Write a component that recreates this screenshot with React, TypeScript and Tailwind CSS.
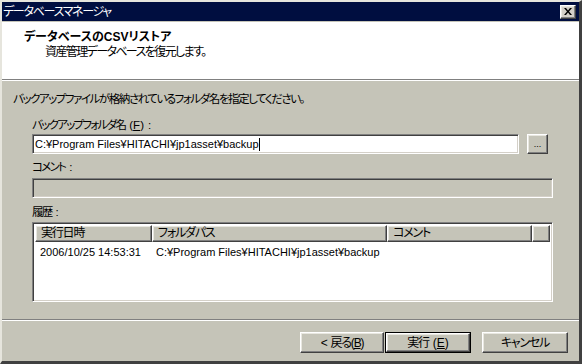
import React from "react";

const raised =
  "border border-t-white border-l-white border-r-[#404040] border-b-[#404040] shadow-[inset_-1px_-1px_0_#808080,inset_1px_1px_0_#e8e7e0]";
const sunken =
  "border border-t-[#808080] border-l-[#808080] border-r-white border-b-white shadow-[inset_1px_1px_0_#404040,inset_-1px_-1px_0_#d4d0c8]";

const jp = "text-[11.5px] tracking-[-1.7px]";
const path = "C:¥Program Files¥HITACHI¥jp1asset¥backup";

function HeaderCell({ w, children }: { w: string; children?: React.ReactNode }) {
  return (
    <div className={`${w} h-[17px] shrink-0 pl-[5px] leading-[15px] text-[12px] tracking-[-1.2px] ${raised}`}>
      {children}
    </div>
  );
}

function Key({ k }: { k: string }) {
  return (
    <span className="ml-[4px] tracking-normal">
      (<span className="underline">{k}</span>)
    </span>
  );
}

function Colon() {
  return <span className="ml-[4px] tracking-normal">:</span>;
}

export default function App() {
  return (
    <div className="w-[582px] h-[364px] overflow-hidden bg-[#c5c4b8] border-l-2 border-t-2 border-r-[3px] border-b-[3px] border-l-[#e6e5dd] border-t-[#e6e5dd] border-r-[#404040] border-b-[#404040] font-['Liberation_Sans','Noto_Sans_CJK_JP',sans-serif] text-[12px] text-black [font-feature-settings:'palt'] whitespace-nowrap flex flex-col">
      {/* title bar */}
      <div className="h-[19px] shrink-0 bg-[#000e40] flex items-center justify-between pl-[1px] pr-[3px]">
        <span className="text-white leading-[16px] text-[12px] tracking-[-1.3px]">データベースマネージャ</span>
        <div className={`w-[16px] h-[14px] bg-[#d4d0c8] flex items-center justify-center ${raised}`}>
          <svg width="8" height="7" viewBox="0 0 8 7">
            <path d="M0 0h2l2 2.5L6 0h2L5 3.5 8 7H6L4 4.5 2 7H0l3-3.5z" fill="#000" />
          </svg>
        </div>
      </div>
      <div className="h-[1px] shrink-0" />

      {/* header */}
      <div className="h-[57px] shrink-0 bg-white pl-[22px] pt-[7px]">
        <div className="font-bold leading-[16px]">データベースのCSVリストア</div>
        <div className="pl-[21px] leading-[16px] mt-[-1px] text-[12px] tracking-[-1.6px]">
          資産管理データベースを復元します。
        </div>
      </div>
      <div className="h-[1px] shrink-0 bg-[#808080]" />
      <div className="h-[1px] shrink-0 bg-white" />

      {/* body */}
      <div className="flex-1 pl-[11px] pt-[10px]">
        <div className="leading-[16px] text-[11.5px] tracking-[-1.45px]">
          バックアップファイルが格納されているフォルダ名を指定してください。
        </div>
        <div className="pl-[19px] mt-[10px] w-[540px]">
          <div className={`leading-[16px] ${jp}`}>
            バックアップフォルダ名<Key k="F" />
            <Colon />
          </div>
          <div className="flex items-center gap-[8px] mt-[1px]">
            <div className={`w-[487px] h-[20px] bg-white pl-[2px] flex items-center ${sunken}`}>
              <span className="leading-[16px] text-[11px]">{path}</span>
              <span className="w-[1px] h-[13px] bg-black" />
            </div>
            <div className={`w-[21px] h-[20px] flex items-center justify-center leading-none text-[9px] ${raised}`}>
              ...
            </div>
          </div>

          <div className={`leading-[16px] mt-[5px] ${jp}`}>
            コメント<Colon />
          </div>
          <div className={`w-[521px] h-[20px] mt-[3px] ${sunken}`} />

          <div className={`leading-[16px] mt-[6px] ${jp}`}>
            履歴<Colon />
          </div>
          <div className={`w-[521px] h-[80px] mt-[2px] bg-white p-[2px] ${sunken}`}>
            <div className="flex bg-[#c5c4b8]">
              <HeaderCell w="w-[117px]">実行日時</HeaderCell>
              <HeaderCell w="w-[235px]">フォルダパス</HeaderCell>
              <HeaderCell w="w-[145px]">コメント</HeaderCell>
              <HeaderCell w="flex-1" />
            </div>
            <div className="flex leading-[16px] mt-[2px] text-[11px]">
              <div className="w-[117px] shrink-0 pl-[5px]">2006/10/25 14:53:31</div>
              <div className="w-[235px] shrink-0 pl-[4px]">{path}</div>
            </div>
          </div>
        </div>
      </div>

      {/* footer */}
      <div className="h-[1px] shrink-0 bg-[#808080]" />
      <div className="h-[1px] shrink-0 bg-white" />
      <div className="h-[40px] shrink-0 flex items-start justify-end pt-[11px] pr-[11px] text-[12px] tracking-[-1.2px]">
        <div className={`w-[84px] h-[21px] flex items-center justify-center leading-[16px] ${raised}`}>
          <span className="mr-[4px]">&lt;</span>戻る(<span className="underline">B</span>)
        </div>
        <div className="ml-[1px] w-[86px] h-[21px] border border-black">
          <div className={`w-full h-full flex items-center justify-center leading-[16px] ${raised}`}>
            実行<Key k="E" />
          </div>
        </div>
        <div className={`ml-[11px] w-[86px] h-[21px] flex items-center justify-center leading-[16px] ${raised}`}>
          キャンセル
        </div>
      </div>
    </div>
  );
}
